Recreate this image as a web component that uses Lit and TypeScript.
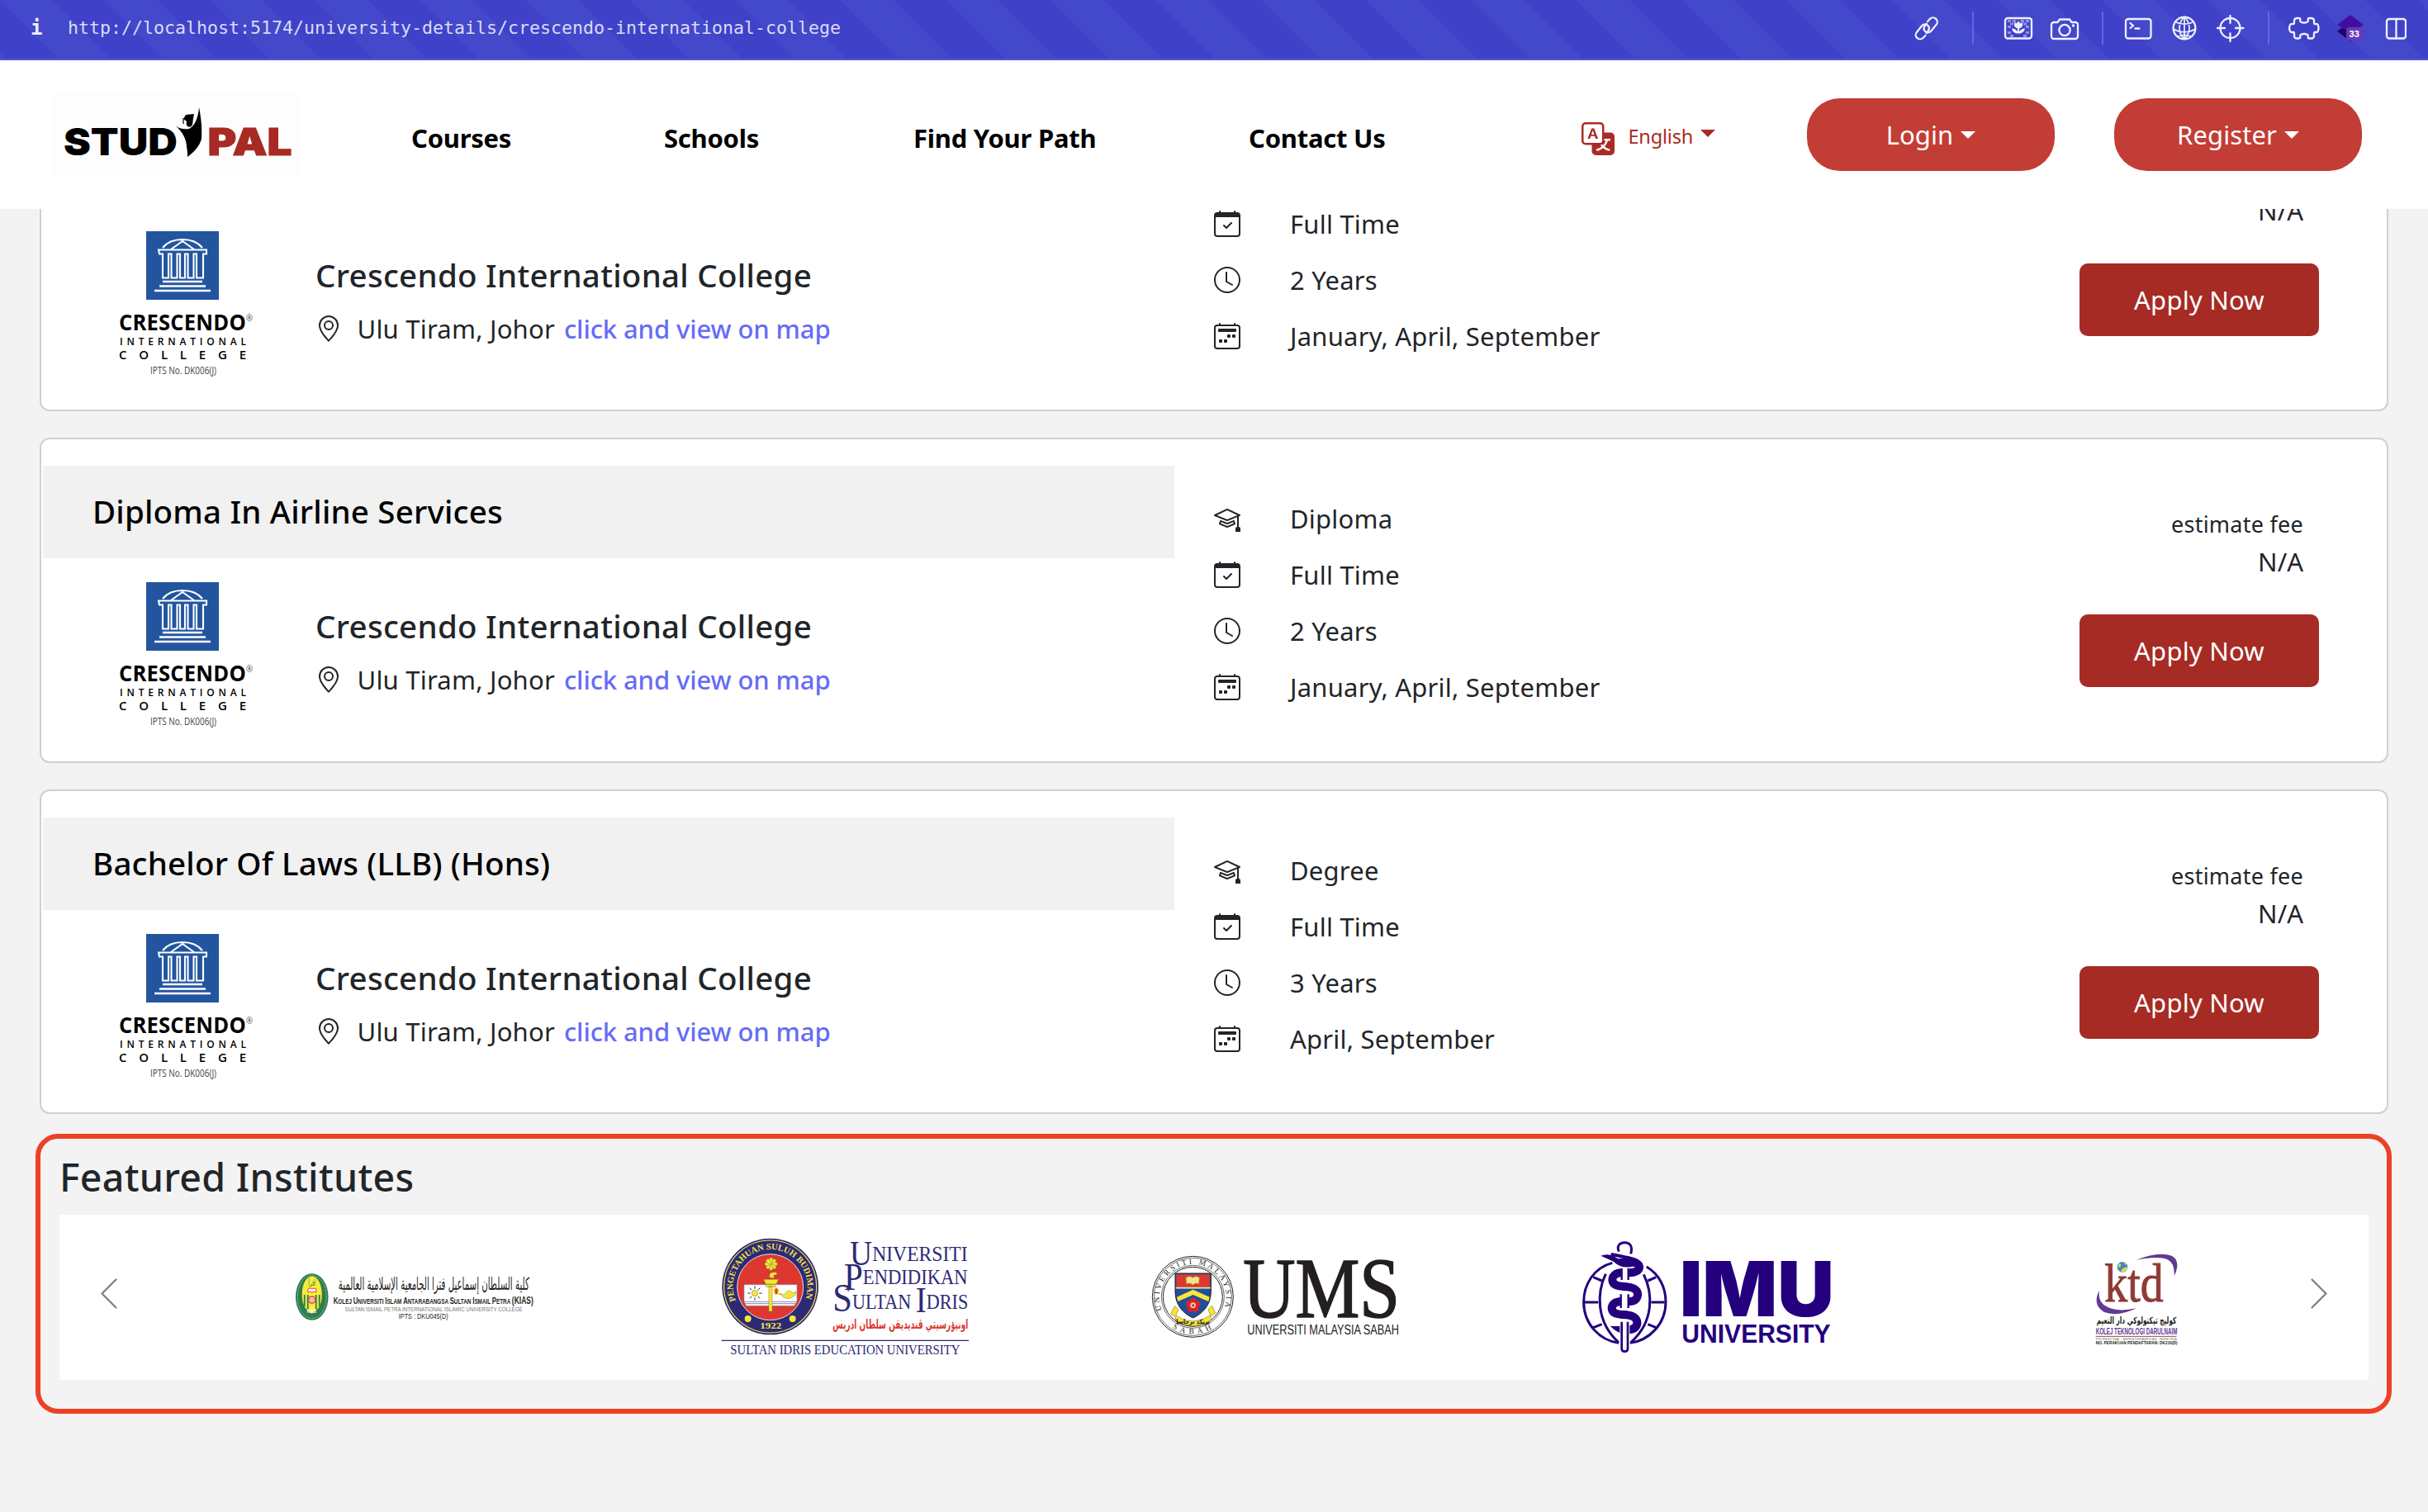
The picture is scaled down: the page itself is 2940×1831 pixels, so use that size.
import { LitElement, html, svg, css } from "lit";
import { customElement, property } from "lit/decorators.js";

/* ---------- shared helpers ---------- */

const label = (x: number, y: number, len: number, size: number, text: string, cls: string) =>
  svg`<text class=${cls} x=${x} y=${y} font-size=${size} textLength=${len} lengthAdjust="spacingAndGlyphs">${text}</text>`;

const glyphs = {
  degree: svg`<path d="M8.211 2.047a.5.5 0 0 0-.422 0l-7.5 3.5a.5.5 0 0 0 .025.917l7.5 3a.5.5 0 0 0 .372 0L14 7.14V13a1 1 0 0 0-1 1v2h3v-2a1 1 0 0 0-1-1V6.739l.686-.275a.5.5 0 0 0 .025-.917zM8 8.46 1.758 5.965 8 3.052l6.242 2.913z"/><path d="M4.176 9.032a.5.5 0 0 0-.656.327l-.5 1.7a.5.5 0 0 0 .294.605l4.5 1.8a.5.5 0 0 0 .372 0l4.5-1.8a.5.5 0 0 0 .294-.605l-.5-1.7a.5.5 0 0 0-.656-.327L8 10.466zm-.068 1.873.22-.748 3.496 1.311a.5.5 0 0 0 .352 0l3.496-1.311.22.748L8 12.46z"/>`,
  mode: svg`<path d="M10.854 7.146a.5.5 0 0 1 0 .708l-3 3a.5.5 0 0 1-.708 0l-1.5-1.5a.5.5 0 1 1 .708-.708L7.5 9.793l2.646-2.647a.5.5 0 0 1 .708 0"/><path d="M3.5 0a.5.5 0 0 1 .5.5V1h8V.5a.5.5 0 0 1 1 0V1h1a2 2 0 0 1 2 2v11a2 2 0 0 1-2 2H2a2 2 0 0 1-2-2V3a2 2 0 0 1 2-2h1V.5a.5.5 0 0 1 .5-.5M1 4v10a1 1 0 0 0 1 1h12a1 1 0 0 0 1-1V4z"/>`,
  clock: svg`<path d="M8 3.5a.5.5 0 0 0-1 0V9a.5.5 0 0 0 .252.434l3.5 2a.5.5 0 0 0 .496-.868L8 8.71z"/><path d="M8 16A8 8 0 1 0 8 0a8 8 0 0 0 0 16m7-8A7 7 0 1 1 1 8a7 7 0 0 1 14 0"/>`,
  intake: svg`<path d="M3.5 0a.5.5 0 0 1 .5.5V1h8V.5a.5.5 0 0 1 1 0V1h1a2 2 0 0 1 2 2v11a2 2 0 0 1-2 2H2a2 2 0 0 1-2-2V3a2 2 0 0 1 2-2h1V.5a.5.5 0 0 1 .5-.5M2 2a1 1 0 0 0-1 1v11a1 1 0 0 0 1 1h12a1 1 0 0 0 1-1V3a1 1 0 0 0-1-1z"/><path d="M2.5 4a.5.5 0 0 1 .5-.5h10a.5.5 0 0 1 .5.5v1a.5.5 0 0 1-.5.5H3a.5.5 0 0 1-.5-.5zM11 7.5a.5.5 0 0 1 .5-.5h1a.5.5 0 0 1 .5.5v1a.5.5 0 0 1-.5.5h-1a.5.5 0 0 1-.5-.5zm-3 0a.5.5 0 0 1 .5-.5h1a.5.5 0 0 1 .5.5v1a.5.5 0 0 1-.5.5h-1a.5.5 0 0 1-.5-.5zm-5 3a.5.5 0 0 1 .5-.5h1a.5.5 0 0 1 .5.5v1a.5.5 0 0 1-.5.5h-1a.5.5 0 0 1-.5-.5zm3 0a.5.5 0 0 1 .5-.5h1a.5.5 0 0 1 .5.5v1a.5.5 0 0 1-.5.5h-1a.5.5 0 0 1-.5-.5z"/>`,
  pin: svg`<path d="M12.166 8.94c-.524 1.062-1.234 2.12-1.96 3.07A32 32 0 0 1 8 14.58a32 32 0 0 1-2.206-2.57c-.726-.95-1.436-2.008-1.96-3.07C3.304 7.867 3 6.862 3 6a5 5 0 0 1 10 0c0 .862-.305 1.867-.834 2.94M8 16s6-5.686 6-10A6 6 0 0 0 2 6c0 4.314 6 10 6 10"/><path d="M8 8a2 2 0 1 1 0-4 2 2 0 0 1 0 4m0 1a3 3 0 1 0 0-6 3 3 0 0 0 0 6"/>`,
  translate: svg`<path d="M4.545 6.714 4.11 8H3l1.862-5h1.284L8 8H6.833l-.435-1.286zm1.634-.736L5.5 3.956h-.049l-.679 2.022z"/><path d="M0 2a2 2 0 0 1 2-2h7a2 2 0 0 1 2 2v3h3a2 2 0 0 1 2 2v7a2 2 0 0 1-2 2H7a2 2 0 0 1-2-2v-3H2a2 2 0 0 1-2-2zm2-1a1 1 0 0 0-1 1v7a1 1 0 0 0 1 1h7a1 1 0 0 0 1-1V2a1 1 0 0 0-1-1zm7.138 9.995q.289.451.63.846c-.748.575-1.673 1.001-2.768 1.292.178.217.451.635.555.867 1.125-.359 2.08-.844 2.886-1.494.777.665 1.739 1.165 2.93 1.472.133-.254.414-.673.629-.89-1.125-.253-2.057-.694-2.82-1.284.681-.747 1.222-1.651 1.621-2.757H14V8h-3v1.047h.765c-.318.844-.74 1.546-1.272 2.13a6 6 0 0 1-.415-.492 2 2 0 0 1-.94.31"/>`,
};

type GlyphName = keyof typeof glyphs;
const glyph = (name: GlyphName, cls: string) =>
  html`<svg class=${cls} viewBox="0 0 16 16" fill="currentColor">${glyphs[name]}</svg>`;

/* ---------- browser address bar ---------- */

@customElement("address-bar")
class AddressBar extends LitElement {
  static styles = css`
    :host {
      display: flex;
      align-items: center;
      box-sizing: border-box;
      height: 73px;
      padding: 0 26px 4px 37px;
      border-bottom: 2px solid #5255d2;
      background: repeating-linear-gradient(45deg, #4448cb 0 5px, #3f42c9 5px 50px, #4448cb 50px 90px);
      color: #eeeefb;
      font-family: "DejaVu Sans Mono", monospace;
    }
    .info {
      width: 45px;
      font-size: 24px;
      font-weight: 700;
      line-height: 36px;
    }
    .url {
      flex: 1;
      font-size: 21.6px;
      line-height: 36px;
      color: #dadbf5;
      white-space: nowrap;
    }
    .tools {
      display: flex;
      align-items: center;
    }
    .tools svg {
      display: block;
      fill: none;
      stroke: #f0f0fc;
      stroke-width: 2.3;
      stroke-linecap: round;
      stroke-linejoin: round;
      height: 40px;
    }
    .tools .solid { fill: #f0f0fc; stroke: none; }
    .tools .faint { fill: #8d90e4; stroke: none; }
    .tools .gem { fill: #430da5; stroke: none; }
    .tools .gem-low { fill: #1d0567; stroke: none; }
    .tools .badge { fill: #673ab7; stroke: none; }
    .tools .count {
      fill: #fff;
      stroke: none;
      font: 700 11px "Liberation Sans", sans-serif;
    }
    .rule {
      width: 2px;
      height: 40px;
      background: #6366e2;
    }
  `;
  render() {
    return html`
      <span class="info">i</span>
      <span class="url">http://localhost:5174/university-details/crescendo-international-college</span>
      <div class="tools">
        <svg width="73" viewBox="2315 13 73 40">
          <path d="M2334 25l3-3.2a5.2 5.2 0 0 1 7.4 7.3l-6 7.4a5 5 0 0 1-7.2.5a5 5 0 0 1-.6-6.4l2.4-3" />
          <path d="M2331.500 42l-3 3a5.200 5.200 0 0 1-7.400-7.300l6-7.400a5 5 0 0 1 7.200-.5a5 5 0 0 1 .6 6.400l-2.400 3" />
        </svg>
        <div class="rule"></div>
        <svg width="155" viewBox="2390 13 155 40">
          <rect x="2428" y="21" width="32" height="24.500" rx="3" />
          <path class="faint" d="M2431 23h4v3h-4zM2437 23h4v3h-4zM2447 23h4v3h-4zM2453 23h4v3h-4zM2431 30h4v3h-4zM2453 30h4v3h-4zM2434 26.500h4v3h-4zM2450 26.500h4v3h-4zM2431 37h4v3h-4zM2453 37h4v3h-4zM2434 41h4v3h-4zM2450 41h4v3h-4z" />
          <path class="solid" d="M2439 26l2.500 1.500 2.500-3 2.500 3 2.500-1.500v4q-1 3-4 3.200v4q3-4 7-3.700q-1 5-6 6h-4q-5-1-6-6q4-.3 7 3.700v-4q-3-.2-4-3.200z" />
          <path d="M2484 29a3 3 0 0 1 3-3h4.500l2.500-3.500h12l2.500 3.500h4.500a3 3 0 0 1 3 3v14a3 3 0 0 1-3 3h-26a3 3 0 0 1-3-3z" />
          <circle cx="2500" cy="35.500" r="6.600" /><circle class="solid" cx="2510.500" cy="30" r="1.700" />
        </svg>
        <div class="rule"></div>
        <svg width="199" viewBox="2547 13 199 40">
          <rect x="2574" y="22" width="30.500" height="23.500" rx="3" />
          <path d="M2579.500 27l3.500 3-3.500 3M2585.500 33.500h5" />
          <circle cx="2645" cy="33" r="13.400" />
          <path d="M2645 19.600c-8 7-8 20 0 26.800M2645 19.600c8 7 8 20 0 26.800M2634 25.500c7 3.500 15 3.500 22 0M2631.700 34c8 5 19 5 26.600 0M2637 43c5-2 11-2 16 0M2645 19.600v26.800" stroke-width="1.700" />
          <circle cx="2700.500" cy="33" r="12" />
          <path d="M2700.500 18v9M2700.500 39.500v9.500M2685 33h9M2707 33h9.500" />
        </svg>
        <div class="rule"></div>
        <svg width="166" viewBox="2748 13 166 40">
          <path d="M2778 24a3 3 0 0 1 3-3h2.500c2 0 2 1.200 1.700 2.500c-1 4 10.500 4 9.600 0c-.3-1.300-.3-2.500 1.700-2.500h2.500a3 3 0 0 1 3 3v2.500c0 2 1 1.800 2.500 1.500c4-1 4 11 0 10c-1.500-.3-2.500-.5-2.500 1.500v3a3 3 0 0 1-3 3h-2.500c-2 0-2-1.200-1.700-2.500c1-4-10.500-4-9.600 0c.3 1.300.3 2.500-1.700 2.500h-2.500a3 3 0 0 1-3-3v-3c0-2-1-1.800-2.500-1.500c-4.500 1-4.500-11 0-10c1.500.3 2.500.5 2.500-1.500z" />
          <path class="gem-low" d="M2830 37l5-4h22l5 4-16 12z" />
          <path class="gem" d="M2846 17l16 12-8 5h-16l-8-5z" />
          <rect class="badge" x="2841" y="32" width="20" height="16" rx="4" />
          <text class="count" x="2844.600" y="44">33</text>
          <rect x="2890" y="22" width="23" height="23.500" rx="3" /><path d="M2901.500 22v23.500" />
        </svg>
      </div>
    `;
  }
}

/* ---------- site header ---------- */

@customElement("site-header")
class SiteHeader extends LitElement {
  static styles = css`
    :host {
      display: flex;
      align-items: flex-start;
      box-sizing: border-box;
      height: 180px;
      padding: 0 80px 0 64px;
      background: #fff;
      font-family: "Noto Sans", "Open Sans", sans-serif;
    }
    .logo {
      display: block;
      margin-top: 40px;
      width: 300px;
      height: 100px;
      background: #fdfdfd;
    }
    .word {
      font-family: Inter, sans-serif;
      font-weight: 900;
    }
    .pal { fill: #a82a24; stroke: #a82a24; stroke-width: 1; }
    .menu {
      display: grid;
      grid-template-columns: 306px 302px 406px 402px;
      margin: 70px 0 0 134px;
      font-size: 31px;
      line-height: 48px;
      font-weight: 700;
      letter-spacing: -0.25px;
      color: #000;
      white-space: nowrap;
    }
    .lang {
      display: flex;
      width: 273px;
      margin: 75px 0 0 1px;
      color: #ab2a24;
      font-size: 23.500px;
      line-height: 34px;
      letter-spacing: -0.2px;
    }
    .translate {
      width: 40px;
      height: 40px;
      margin-right: 16.500px;
    }
    .caret {
      border: solid transparent;
      border-width: 9.500px 9px 0;
      border-top-color: currentColor;
    }
    .lang .caret { margin: 9px 0 0 9px; }
    .btn {
      display: flex;
      align-items: center;
      justify-content: center;
      gap: 9px;
      width: 300px;
      height: 88px;
      margin-top: 46px;
      border-radius: 40px;
      background: #c23d36;
      color: #fff;
      font-size: 31px;
      letter-spacing: 0.1px;
    }
    .btn + .btn { margin-left: 72px; }
  `;
  render() {
    return html`
      <svg class="logo" viewBox="0 0 300 100">
        ${label(13, 75, 138, 46, "STUD", "word")}
        ${label(187.5, 75, 102, 46, "PAL", "word pal")}
        <path d="M177 17c2 10 4 24 3 38c-2 9-10 17-17 22c0-3 0-7-1-12c0-9-5-19-14-26c5 4 11 5 17 4c6-3 11-12 12-26z" />
        <path d="M161 26l10-1-1 5-1 8q-2 4-6 2q-2-2-1-6l-4-3z" />
        <path d="M158 30v7" stroke="#000" stroke-width="1.200" />
      </svg>
      <nav class="menu">
        <span>Courses</span><span>Schools</span><span>Find Your Path</span><span>Contact Us</span>
      </nav>
      <div class="lang">${glyph("translate", "translate")}<span>English</span><i class="caret"></i></div>
      <div class="btn"><span>Login</span><i class="caret"></i></div>
      <div class="btn"><span>Register</span><i class="caret"></i></div>
    `;
  }
}

/* ---------- course card ---------- */

@customElement("course-card")
class CourseCard extends LitElement {
  @property() heading = "";
  @property() level = "";
  @property() duration = "";
  @property() intake = "";

  static styles = css`
    :host {
      display: grid;
      grid-template-columns: 1370px 1fr 372px;
      box-sizing: border-box;
      height: 393.400px;
      padding-left: 2px;
      border: 2px solid #d0d0d0;
      border-radius: 12px;
      background: #fff;
      color: #212529;
      font-family: "Noto Sans", "Open Sans", sans-serif;
      font-size: 31px;
      letter-spacing: 0.22px;
      white-space: nowrap;
    }
    .title {
      margin: 32px 0 0;
      padding-left: 60px;
      height: 112px;
      line-height: 110px;
      background: #f1f1f1;
      color: #000;
      font-size: 38.500px;
      font-weight: 500;
      letter-spacing: 0.2px;
    }
    .school {
      display: flex;
      padding: 24px 0 0 88px;
    }
    .crest {
      display: block;
      width: 170px;
      height: 184px;
      margin-right: 72px;
    }
    .crest-bg { fill: #23559f; }
    .line { fill: none; stroke: #fff; stroke-width: 2.100; }
    .name-b { font-family: "Open Sans", sans-serif; font-weight: 700; }
    .name-m { font-family: "Open Sans", sans-serif; font-weight: 600; letter-spacing: 0; }
    .name-l { font-family: "Open Sans", sans-serif; fill: #444; letter-spacing: 0; }
    .college {
      margin-top: 30px;
      font-size: 38.500px;
      font-weight: 500;
      line-height: 56px;
      letter-spacing: 0.28px;
    }
    .place {
      display: flex;
      align-items: center;
      margin-top: 13px;
      line-height: 48px;
    }
    .icon {
      display: block;
      width: 32px;
      height: 32px;
    }
    .place .icon { margin: 0 18.500px 0 0; }
    .map {
      margin-left: 11px;
      color: #666cf6;
      font-weight: 500;
      letter-spacing: -0.1px;
    }
    .facts {
      display: flex;
      flex-direction: column;
      gap: 36px;
      padding: 80px 0 0 48px;
    }
    .fact {
      display: flex;
      gap: 60px;
      height: 32px;
      line-height: 32px;
    }
    .action {
      display: flex;
      flex-direction: column;
      align-items: flex-end;
      padding: 82px 82px 0 0;
    }
    .small { padding-right: 19px; font-size: 27px; line-height: 42px; letter-spacing: 0.25px; }
    .fee { padding-right: 19px; line-height: 48px; letter-spacing: 0; }
    .apply {
      margin-top: 40px;
      width: 290px;
      height: 88px;
      border-radius: 10px;
      background: #a62b24;
      color: #fff;
      line-height: 88px;
      text-align: center;
    }
  `;
  render() {
    return html`
      <div>
        <h3 class="title">${this.heading}</h3>
        <div class="school">
          <svg class="crest" viewBox="0 0 170 184">
            <rect class="crest-bg" x="37" y="5" width="88" height="83" />
            <g class="line">
              <path d="M57 25q8-10 24-10t24 10M67 27l14-10 14 10M52 27.500h58v5h-4v29h-8v-29h-3.500v29h-7v-29h-3.500v29h-6v-29h-3.500v29h-7v-29h-3.500v29h-7v-29h-4z" />
              <path d="M57 66h48M53 71.500h56M47 77h68" stroke-width="2.600" />
            </g>
            ${label(4, 125, 154, 26, "CRESCENDO", "name-b")}
            ${label(158, 114, 8, 11, "®", "name-l")}
            <text class="name-m" x="5" y="143" font-size="12" textLength="153">INTERNATIONAL</text>
            <text class="name-m" x="4" y="160" font-size="15" textLength="154">COLLEGE</text>
            ${label(42, 177.5, 80, 12, "IPTS No. DK006(J)", "name-l")}
          </svg>
          <div>
            <div class="college">Crescendo International College</div>
            <div class="place">
              ${glyph("pin", "icon")}<span>Ulu Tiram, Johor</span><a class="map">click and view on map</a>
            </div>
          </div>
        </div>
      </div>
      <div class="facts">
        <div class="fact">${glyph("degree", "icon")}<span>${this.level}</span></div>
        <div class="fact">${glyph("mode", "icon")}<span>Full Time</span></div>
        <div class="fact">${glyph("clock", "icon")}<span>${this.duration}</span></div>
        <div class="fact">${glyph("intake", "icon")}<span>${this.intake}</span></div>
      </div>
      <div class="action">
        <div class="small">estimate fee</div>
        <div class="fee">N/A</div>
        <div class="apply">Apply Now</div>
      </div>
    `;
  }
}

/* ---------- institute logos ---------- */

const kias = html`<svg class="logo" viewBox="-98.750 0 521.500 200">
  <ellipse cx="38" cy="99.500" rx="19.800" ry="28.300" fill="#2f7d4f" />
  <ellipse cx="38" cy="99.500" rx="17.500" ry="26" fill="none" stroke="#9cc9a0" stroke-width="1" stroke-dasharray="1.500 1" />
  <path d="M26 97c0-30 24-30 24 0v2c-1 14-6 16-12 21c-6-5-11-7-12-21z" fill="#f7ec3c" />
  <path d="M29 97v14M33 97v18M43 97v18M47 97v14" stroke="#2f7d4f" stroke-width="1.800" />
  <path d="M33 90q3-2 5 0q2-2 5 0v4q-3-2-5 0q-2-2-5 0z" fill="#fff" stroke="#d6443c" stroke-width="1" />
  <circle cx="38" cy="103" r="4.200" fill="#f3b7a8" stroke="#d6443c" stroke-width="1.200" />
  ${label(33.5, 86, 9, 10, "اقرأ", "arabic green")}
  ${label(32, 119, 11, 7, "KIAS", "sans bold white")}
  ${label(70, 91, 231, 21, "كلية السلطان إسماعيل فترا الجامعية الإسلامية العالمية", "arabic ink")}
  <text class="sans bold ink" x="64" y="107.500" font-size="9" textLength="242" lengthAdjust="spacingAndGlyphs"><tspan font-size="11">K</tspan>OLEJ <tspan font-size="11">U</tspan>NIVERSITI <tspan font-size="11">I</tspan>SLAM <tspan font-size="11">A</tspan>NTARABANGSA <tspan font-size="11">S</tspan>ULTAN <tspan font-size="11">I</tspan>SMAIL <tspan font-size="11">P</tspan>ETRA <tspan font-size="12">(KIAS)</tspan></text>
  ${label(78, 116.5, 215, 7.5, "SULTAN ISMAIL PETRA INTERNATIONAL ISLAMIC UNIVERSITY COLLEGE", "sans grey")}
  ${label(143, 125.5, 60, 9, "IPTS : DKU045(D)", "sans ink")}
</svg>`;

const upsi = html`<svg class="logo" viewBox="-232 3 1564.500 600">
  <circle cx="277" cy="264" r="175" fill="#2c2a75" />
  <circle cx="277" cy="264" r="168" fill="none" stroke="#f5e63e" stroke-width="3.500" />
  <circle cx="277" cy="266" r="120" fill="#dc3830" stroke="#e9e4ee" stroke-width="3" />
  <path id="upsi-ring" d="M152 315A135 135 0 1 1 402 315" fill="none" />
  <text class="serif bold yellow" font-size="32" textLength="520" lengthAdjust="spacingAndGlyphs"><textPath href="#upsi-ring">PENGETAHUAN SULUH BUDIMAN</textPath></text>
  ${label(240, 418, 78, 30, "1922", "serif bold yellow")}
  <circle cx="196" cy="381" r="12" fill="#f5e63e" /><circle cx="358" cy="381" r="12" fill="#f5e63e" />
  <path d="M182 257h192v62l-10 15H190l-8-15z" fill="#fff" stroke="#8d88b0" stroke-width="2" />
  <path d="M182 319h192M186 326h184" stroke="#8d88b0" stroke-width="3" />
  <g fill="#f5e63e" stroke="#8a7a20" stroke-width="1.500">
    <path d="M272 262h12v92h-12zM253 238h54l-8 17h-38zM274 230q-2-18 14-18h12v10h-10v12zM261 256h34v9h-34z" />
    <g>
      ${[0, 45, 90, 135, 180, 225, 270, 315].map((a) => svg`<ellipse cx="280" cy="170" rx="7" ry="11" transform="rotate(${a} 280 182)" />`)}
    </g>
    <circle cx="221" cy="288" r="11" />
    <path d="M306 290q12-2 20 4q10-12 18-16q10 2 14 10l12-6q2 14-8 16q-8 10-24 10q-16-4-22-14z" />
  </g>
  <ellipse cx="299" cy="280" rx="11" ry="14" fill="#f5e63e" /><ellipse cx="299" cy="281" rx="5" ry="10" fill="#dc3830" />
  <path d="M221 262v10M221 304v10M195 288h10M237 288h10M202 269l8 8M240 269l-8 8M202 307l8-8M240 307l-8-8" stroke="#333" stroke-width="3" />
  <text class="serif navy" x="566" y="172" font-size="78" textLength="428" lengthAdjust="spacingAndGlyphs"><tspan font-size="124" dy="14">U</tspan><tspan dy="-14">NIVERSITI</tspan></text>
  <text class="serif navy" x="545" y="256" font-size="76" textLength="449" lengthAdjust="spacingAndGlyphs"><tspan font-size="138" dy="19">P</tspan><tspan dy="-19">ENDIDIKAN</tspan></text>
  <text class="serif navy" x="504" y="344" font-size="76" textLength="492" lengthAdjust="spacingAndGlyphs"><tspan font-size="146" dy="11">S</tspan><tspan dy="-11">ULTAN </tspan><tspan font-size="134" dy="14">I</tspan><tspan dy="-14">DRIS</tspan></text>
  ${label(504, 417, 492, 46, "اونيۏرسيتي ڤنديديقن سلطان ادريس", "arabic red bold")}
  <path d="M100 460h898" stroke="#2c2a75" stroke-width="3.500" />
  ${label(132, 511, 834, 48, "SULTAN IDRIS EDUCATION UNIVERSITY", "serif navy")}
</svg>`;

const ums = html`<svg class="logo" viewBox="-227 -27 1564.500 600">
  <g fill="none" stroke="#231f20">
    <circle cx="254" cy="271" r="147" stroke-width="3" /><circle cx="254" cy="271" r="141" stroke-width="2" />
    <circle cx="254" cy="271" r="114" stroke-width="2" /><circle cx="254" cy="271" r="108" stroke-width="3" />
  </g>
  <path id="ums-top" d="M142 319A121 121 0 1 1 366 319" fill="none" />
  <path id="ums-low" d="M180 384A136 136 0 0 0 328 384" fill="none" />
  <text class="serif ink" font-size="28" textLength="462"><textPath href="#ums-top">UNIVERSITI  MALAYSIA</textPath></text>
  <text class="serif ink" font-size="28" textLength="150"><textPath href="#ums-low">SABAH</textPath></text>
  <path d="M190 186h130v70c-2 50-35 78-65 92c-32-14-63-42-65-92z" fill="#1f4e9c" stroke="#231f20" stroke-width="3" />
  <path d="M194 190h122v46H194z" fill="#dc3830" /><path d="M192 239h126" stroke="#f3e9a0" stroke-width="5" />
  <path d="M196 272l59-27 60 27-4 16-56-24-55 24z" fill="#f9e53a" />
  <path d="M229 202q15-10 25 0q10-10 24 0l-2 22q-12-6-22 4q-10-10-23-4z" fill="#f6e28a" stroke="#b78b28" stroke-width="2" />
  ${[0, 72, 144, 216, 288].map((a) => svg`<circle cx="255" cy="287" r="12" fill="#d8232e" transform="rotate(${a} 255 302)" />`)}
  <circle cx="255" cy="302" r="10" fill="#f4c9b0" /><circle cx="255" cy="302" r="4.500" fill="#d8232e" />
  <path d="M188 305l14 12-10 22q60 42 126 0l-8-22 14-14 12 28-18 10 2 16q-64 40-128 0l-2-14-16-10z" fill="#f9e53a" stroke="#8d7a1c" stroke-width="2" />
  ${label(194, 370, 122, 24, "برتكد برجاسا", "arabic ink bold")}
  <text class="serif ink heavy" x="437" y="345" font-size="308" textLength="569" lengthAdjust="spacingAndGlyphs">UMS</text>
  ${label(452, 407, 551, 48, "UNIVERSITI MALAYSIA SABAH", "sans ink")}
</svg>`;

const imu = html`<svg class="logo" viewBox="-223 -27 1564.500 600">
  <g fill="none" stroke="#24007f" stroke-width="9">
    <path d="M216 148C150 165 112 225 112 290C112 370 170 430 240 439M340 162C385 188 410 235 410 290C410 370 350 430 280 439" />
    <path d="M192 188C160 255 155 360 238 436M330 190C362 255 370 360 284 436" />
    <path d="M147 200l31 13M116 291h49M147 383l31-12M375 200l-30 13M406 291h-49M375 383l-30-12" />
    <path d="M240 107C230 85 245 74 261 74S292 85 283 115" />
  </g>
  <g fill="none" stroke="#24007f" stroke-width="30">
    <path d="M248 138C290 138 314 150 314 164C312 182 290 184 270 184" />
    <path d="M250 184C226 184 216 198 216 210C218 236 250 232 272 235C298 238 310 250 308 266C304 288 288 288 268 288" />
    <path d="M250 288C224 288 214 300 214 314C218 340 252 334 274 338C300 342 308 356 306 370C300 392 280 392 252 390" />
  </g>
  <path d="M174 122q20-8 36-2l2-9q56 10 82 18q30 10 36 36l-40-4q-40 10-70-18z" fill="#24007f" />
  <path d="M224 125l32 7-20 1z" fill="#fff" />
  <path d="M208 377q36 2 60-2v32q-34-2-60-30z" fill="#24007f" />
  <path d="M249 170h26v40h-26zM249 264h26v42h-26z" fill="#fff" />
  <path d="M250 168v42M274 168v42M247 262v50M274 262v50" stroke="#24007f" stroke-width="7" />
  <path d="M243 362v103q4 12 18 12t18-12V362z" fill="#fff" />
  <path d="M250 362v98q0 10 11 10t11-10v-98" fill="none" stroke="#24007f" stroke-width="8" />
  ${label(460, 342, 562, 275, "IMU", "inter black purple")}
  ${label(468, 438, 541, 92, "UNIVERSITY", "sans bold purple")}
</svg>`;

const ktd = html`<svg class="logo" viewBox="-458 -27 1564.500 600">
  <path d="M323 137Q400 105 450 122Q485 140 459 196Q462 150 435 136Q400 122 323 137z" fill="#613a92" />
  <path d="M187 248Q160 300 205 327Q255 345 322 313Q250 328 214 307Q180 290 187 248z" fill="#613a92" />
  <text class="serif maroon" x="206" y="288" font-size="194" textLength="214" lengthAdjust="spacingAndGlyphs">ktd</text>
  <circle cx="271" cy="163" r="19" fill="#4a86c5" />
  <path d="M258 150l8 4-2 8-8 2zM264 182l6-12 16-8 3 6q-8 14-25 14zM276 146l10 4-4 6z" fill="#e6e13a" />
  ${label(177, 368, 290, 34, "كوليج تيكنولوکي دار النعيم", "arabic ink bold")}
  ${label(174, 407, 296, 32, "KOLEJ  TEKNOLOGI  DARULNAIM", "sans bold violet")}
  <path d="M174 415h294" stroke="#9a4a3c" stroke-width="3" />
  ${label(174, 429, 294, 12, "PROFESIONAL . BERKETERAMPILAN . BERETIKA", "sans grey")}
  ${label(174, 444, 297, 15, "NO. PERAKUAN PENDAFTARAN: DK216(D)", "sans bold ink")}
</svg>`;

@customElement("featured-institutes")
class FeaturedInstitutes extends LitElement {
  static styles = css`
    :host {
      display: block;
      box-sizing: border-box;
      width: 2853px;
      margin: 24px 0 0 43px;
      padding: 16px 22px 35px 23px;
      border: 6px solid #ec4126;
      border-radius: 27px;
      font-family: "Noto Sans", "Open Sans", sans-serif;
    }
    .heading {
      margin: 0 0 16px;
      color: #212529;
      font-size: 46.500px;
      font-weight: 500;
      line-height: 60px;
      letter-spacing: 0.3px;
    }
    .carousel {
      position: relative;
      display: grid;
      grid-template-columns: repeat(5, 521.500px);
      padding-left: 169.250px;
      height: 200px;
      background: #fff;
      overflow: hidden;
    }
    .logo { display: block; width: 521.500px; height: 200px; }
    .arrow {
      position: absolute;
      top: 76px;
      width: 22px;
      height: 39px;
      fill: none;
      stroke: #7f7f7f;
      stroke-width: 2.300;
      stroke-linecap: round;
      stroke-linejoin: round;
    }
    .prev { left: 49px; }
    .next { right: 49px; }
    .serif { font-family: "Liberation Serif", serif; }
    .sans { font-family: "Liberation Sans", sans-serif; }
    .inter { font-family: Inter, sans-serif; }
    .arabic { font-family: "DejaVu Sans", sans-serif; }
    .bold { font-weight: 700; }
    .black { font-weight: 900; }
    .ink { fill: #231f20; }
    .heavy { stroke: #231f20; stroke-width: 5; }
    .white { fill: #fff; }
    .grey { fill: #777; }
    .green { fill: #2f7d4f; }
    .yellow { fill: #f5e63e; }
    .navy { fill: #2c2a75; }
    .red { fill: #dc3830; }
    .purple { fill: #24007f; }
    .maroon { fill: #8f3b35; stroke: #8f3b35; stroke-width: 3; }
    .violet { fill: #613a92; }
  `;
  render() {
    return html`
      <h2 class="heading">Featured Institutes</h2>
      <div class="carousel">
        ${[kias, upsi, ums, imu, ktd]}
        <svg class="arrow prev" viewBox="0 0 22 39"><path d="M19.500 2.500L2.500 19.500l17 17" /></svg>
        <svg class="arrow next" viewBox="0 0 22 39"><path d="M2.500 2.500l17 17-17 17" /></svg>
      </div>
    `;
  }
}

/* ---------- page ---------- */

const courses = [
  { heading: "", level: "", duration: "2 Years", intake: "January, April, September" },
  { heading: "Diploma In Airline Services", level: "Diploma", duration: "2 Years", intake: "January, April, September" },
  { heading: "Bachelor Of Laws (LLB) (Hons)", level: "Degree", duration: "3 Years", intake: "April, September" },
];

@customElement("app-root")
class AppRoot extends LitElement {
  static styles = css`
    :host {
      display: flex;
      flex-direction: column;
      width: 2940px;
      height: 1831px;
      overflow: hidden;
      background: #f3f3f3;
    }
    address-bar, site-header { flex: none; }
    .content {
      flex: 1;
      min-height: 0;
      overflow: hidden;
    }
    .list {
      display: flex;
      flex-direction: column;
      gap: 32px;
      margin: -148px 48px 0;
    }
  `;
  render() {
    return html`
      <address-bar></address-bar>
      <site-header></site-header>
      <main class="content">
        <div class="list">
          ${courses.map(
            (c) => html`<course-card .heading=${c.heading} .level=${c.level} .duration=${c.duration} .intake=${c.intake}></course-card>`
          )}
        </div>
        <featured-institutes></featured-institutes>
      </main>
    `;
  }
}
